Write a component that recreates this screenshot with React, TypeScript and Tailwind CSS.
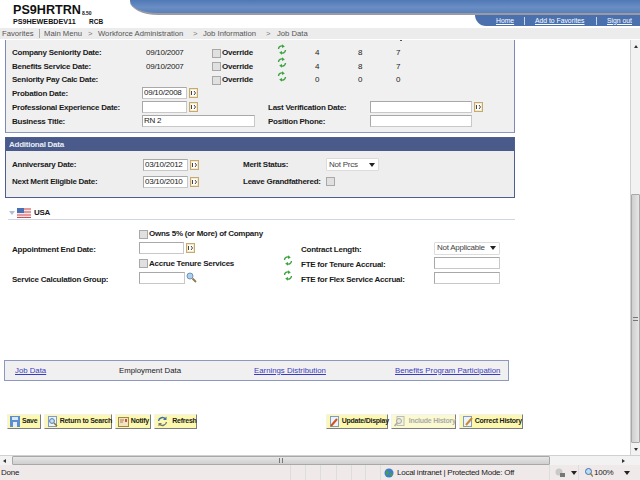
import type { ReactNode } from 'react';

const Refresh = () => (
  <svg width="10" height="11" viewBox="0 0 10 11" fill="none" stroke="#3ba33f" strokeWidth="1.4" className="-translate-y-[4px]">
    <path d="M1.5 5A3.2 3.2 0 0 1 6 2.2" />
    <path d="M8.5 6A3.2 3.2 0 0 1 4 8.8" />
    <path d="M5 0.3L7.8 2.4L5 4z" fill="#3ba33f" stroke="none" />
    <path d="M5 10.7L2.2 8.6L5 7z" fill="#3ba33f" stroke="none" />
  </svg>
);

const Calendar = () => (
  <svg width="9" height="10" viewBox="0 0 9 10" className="shrink-0">
    <rect x="0.5" y="0.5" width="8" height="9" fill="#f6e9c6" stroke="#c4aa72" />
    <rect x="2" y="2" width="5" height="6" fill="#fff" />
    <path d="M2.5 3v4M5 3l1.5 2L5 7" stroke="#444" fill="none" />
  </svg>
);

const Lookup = () => (
  <svg width="11" height="11" viewBox="0 0 11 11" className="shrink-0">
    <circle cx="4" cy="4" r="3" fill="#a9d0ee" stroke="#6f94b5" />
    <path d="M6.5 6.5L10 10" stroke="#8d7a55" strokeWidth="1.8" />
  </svg>
);

const Flag = () => (
  <svg width="14" height="10" viewBox="0 0 14 10" className="shrink-0">
    <rect width="14" height="10" fill="#f4e6e6" />
    <path d="M0 1h14M0 4h14M0 7h14M0 9.5h14" stroke="#cf4f4f" strokeWidth="1.2" />
    <rect width="7" height="5" fill="#4a6fb5" />
  </svg>
);

const Check = () => <span className="block h-[9px] w-[9px] shrink-0 border border-[#a8a8a8] bg-[#e0e0e0]" />;

const Field = ({ w, value = '', lift = '' }: { w: string; value?: string; lift?: string }) => (
  <input
    readOnly
    value={value}
    className={`h-[12px] ${w} ${lift} border border-[#c8c8c8] border-t-[#a8a8a8] border-l-[#a8a8a8] bg-white pl-[1px] text-[8px] text-[#222] outline-none`}
  />
);

const Chevron = () => (
  <svg width="6" height="4" viewBox="0 0 6 4" className="shrink-0">
    <path d="M0 0h6L3 4z" fill="#222" />
  </svg>
);

const Picker = ({ w, text, lift = '' }: { w: string; text: string; lift?: string }) => (
  <div className={`flex h-[13px] ${w} ${lift} items-center justify-between rounded-[1px] border border-[#dcdcdc] bg-white pl-[2px] pr-[3px] font-normal text-[#444]`}>
    <span>{text}</span>
    <Chevron />
  </div>
);

const SENIORITY = [
  { label: 'Company Seniority Date:', value: '09/10/2007', h: 'h-[14px]', nums: ['4', '8', '7'] },
  { label: 'Benefits Service Date:', value: '09/10/2007', h: 'h-[13px]', nums: ['4', '8', '7'] },
  { label: 'Seniority Pay Calc Date:', value: '', h: 'h-[14px]', nums: ['0', '0', '0'] },
];

const Tab = ({ children }: { children: ReactNode }) => <span className="text-[6.8px] tracking-normal underline">{children}</span>;

const Crumb = () => <span className="w-[5px] text-[#777]">&gt;</span>;

const Btn = ({ w, icon, label, off }: { w: string; icon: ReactNode; label: string; off?: boolean }) => (
  <button
    className={`flex h-[15px] ${w} items-center gap-[2px] border border-[#f2f2f2] border-r-[#7d7d7d] border-b-[#7d7d7d] ${off ? 'bg-[#fbf9cf] text-[#aaa]' : 'bg-[#fcf9ae] text-[#222]'} pl-[2px] text-[7px] font-bold`}
  >
    {icon}
    <span>{label}</span>
  </button>
);

const Page = ({ mark }: { mark: ReactNode }) => (
  <svg width="11" height="11" viewBox="0 0 11 11" className="shrink-0">
    <rect x="1.5" y="0.5" width="8" height="10" fill="#eef3fb" stroke="#7f9cc4" />
    {mark}
  </svg>
);

export default function App() {
  return (
    <div className="flex h-[480px] w-[640px] flex-col overflow-hidden bg-white font-['Liberation_Sans',Arial,sans-serif] text-[8px] tracking-[-0.25px] whitespace-nowrap text-[#1a1a1a]">
      {/* top banner */}
      <header className="flex h-[28px] shrink-0 tracking-normal">
        <div className="w-[130px] shrink-0 pl-[13px] pt-[4px] text-[#111]">
          <div className="flex items-end leading-[13px]">
            <span className="text-[12.6px] font-bold">PS9HRTRN</span>
            <span className="mb-[1px] ml-[1px] text-[5px] font-bold leading-[6px]">8.50</span>
          </div>
          <div className="flex text-[7.2px] font-bold leading-[9px]">
            <span className="w-[76px]">PS9HEWEBDEV11</span>
            <span className="text-[6.5px]">RCB</span>
          </div>
        </div>
        <div className="flex flex-1 flex-col">
          <div className="h-[15px] rounded-bl-[28px_14px] border-b-2 border-[#9a9aa5] bg-[linear-gradient(#4f78b4,#6a8ec4_55%,#5a80bb)]" />
          <div className="flex justify-end">
            <nav className="flex h-[11px] w-[165px] items-center rounded-bl-[12px] bg-[#4a70ae] pl-[21px] text-white">
              <span className="w-[28px]"><Tab>Home</Tab></span>
              <span className="h-[8px] w-px bg-[#c8d4e8]" />
              <span className="ml-[10px] w-[61px]"><Tab>Add to Favorites</Tab></span>
              <span className="h-[8px] w-px bg-[#c8d4e8]" />
              <span className="ml-[10px]"><Tab>Sign out</Tab></span>
            </nav>
          </div>
        </div>
      </header>

      {/* breadcrumbs */}
      <div className="flex h-[11px] shrink-0 items-center bg-[#ececec] pl-[2px] text-[7.7px] tracking-normal text-[#555]">
        <span className="w-[37px]">Favorites</span>
        <span className="h-[9px] w-px bg-[#aaa]" />
        <span className="ml-[4px] w-[44px]">Main Menu</span>
        <Crumb />
        <span className="ml-[5px] w-[95px]">Workforce Administration</span>
        <Crumb />
        <span className="ml-[5px] w-[63px]">Job Information</span>
        <Crumb />
        <span className="ml-[6px]">Job Data</span>
      </div>

      <div className="mt-[1px] flex min-h-0 flex-1">
        <main className="w-[630px] shrink-0">
          {/* seniority panel */}
          <section className="relative ml-[5px] h-[93px] w-[510px] border-x border-b border-x-[#7d88b5] border-b-[#8d98c2] bg-[#f0f0f0] pl-[6px] pt-[6px]">
            <span className="absolute left-[394px] top-0 h-px w-[2px] bg-[#555]" />
            {SENIORITY.map(row => (
              <div key={row.label} className={`flex ${row.h} items-center`}>
                <span className="w-[134px] font-bold">{row.label}</span>
                <span className="w-[66px]">{row.value}</span>
                <Check />
                <span className="ml-[1px] w-[55px] font-bold">Override</span>
                <span className="w-[38px]"><Refresh /></span>
                <span className="w-[43px]">{row.nums[0]}</span>
                <span className="w-[38px]">{row.nums[1]}</span>
                <span>{row.nums[2]}</span>
              </div>
            ))}
            <div className="flex h-[14px] items-center">
              <span className="w-[130px] font-bold">Probation Date:</span>
              <Field w="w-[45px]" value="09/10/2008" lift="-translate-y-px" />
              <span className="ml-[2px] -translate-y-px"><Calendar /></span>
            </div>
            <div className="flex h-[14px] items-center">
              <span className="w-[130px] font-bold">Professional Experience Date:</span>
              <Field w="w-[45px]" lift="-translate-y-px" />
              <span className="ml-[2px] w-[79px] -translate-y-px"><Calendar /></span>
              <span className="w-[102px] font-bold">Last Verification Date:</span>
              <Field w="w-[102px]" lift="-translate-y-px" />
              <span className="ml-[2px] -translate-y-px"><Calendar /></span>
            </div>
            <div className="flex h-[13px] items-center">
              <span className="w-[130px] font-bold">Business Title:</span>
              <Field w="w-[113px]" value="RN 2" lift="-translate-y-px" />
              <span className="ml-[13px] w-[102px] font-bold">Position Phone:</span>
              <Field w="w-[102px]" lift="-translate-y-px" />
            </div>
          </section>

          {/* additional data */}
          <section className="ml-[5px] mt-[4px] w-[510px] border border-[#4f5e91] bg-[#eeeeee]">
            <h2 className="flex h-[13px] items-center bg-[#4a5a8a] pl-[3px] font-bold text-[#e8ecf5]">Additional Data</h2>
            <div className="flex h-[22px] items-center pl-[6px] pt-[5px]">
              <span className="w-[131px] font-bold">Anniversary Date:</span>
              <Field w="w-[45px]" value="03/10/2012" />
              <span className="ml-[2px] w-[53px]"><Calendar /></span>
              <span className="w-[83px] font-bold">Merit Status:</span>
              <Picker w="w-[53px]" text="Not Prcs" />
            </div>
            <div className="flex h-[24px] items-center pl-[6px] pb-[7px]">
              <span className="w-[131px] font-bold">Next Merit Eligible Date:</span>
              <Field w="w-[45px]" value="03/10/2010" />
              <span className="ml-[2px] w-[53px]"><Calendar /></span>
              <span className="w-[83px] font-bold">Leave Grandfathered:</span>
              <Check />
            </div>
          </section>

          {/* USA */}
          <div className="ml-[8px] mt-[8px] flex h-[14px] w-[507px] items-center border-b border-[#cfd4e6]">
            <span className="ml-[1px] h-0 w-0 border-x-[3px] border-t-[4px] border-x-transparent border-t-[#a9c2d8]" />
            <span className="ml-[2px]"><Flag /></span>
            <span className="ml-[3px] font-bold">USA</span>
          </div>

          <div className="ml-[12px] mt-[7px] grid w-[490px] grid-cols-[127px_144px_18px_133px_66px] grid-rows-[16px_14px_15px_15px] items-center font-bold">
            <span />
            <span className="flex -translate-y-px items-center gap-[1px]"><Check /> <span>Owns 5% (or More) of Company</span></span>
            <span />
            <span />
            <span />

            <span>Appointment End Date:</span>
            <span className="flex -translate-y-[2px] items-center gap-[2px]"><Field w="w-[45px]" /><Calendar /></span>
            <span />
            <span>Contract Length:</span>
            <Picker w="w-[66px]" text="Not Applicable" lift="-translate-y-[2px]" />

            <span />
            <span className="flex -translate-y-px items-center gap-[1px]"><Check /> <span>Accrue Tenure Services</span></span>
            <Refresh />
            <span>FTE for Tenure Accrual:</span>
            <Field w="w-[66px]" lift="-translate-y-[2px]" />

            <span>Service Calculation Group:</span>
            <span className="flex -translate-y-[2px] items-center gap-[1px]"><Field w="w-[46px]" /><Lookup /></span>
            <Refresh />
            <span>FTE for Flex Service Accrual:</span>
            <Field w="w-[66px]" lift="-translate-y-[2px]" />
          </div>

          {/* page links */}
          <div className="ml-[4px] mt-[73px] flex h-[21px] w-[505px] items-center border border-[#8d98c2] bg-[#f0f0f0] pl-[10px] text-[7.8px] tracking-normal">
            <span className="w-[104px] text-[#3b3bc0]"><span className="underline">Job Data</span></span>
            <span className="w-[135px]">Employment Data</span>
            <span className="w-[141px] text-[#3b3bc0] underline">Earnings Distribution</span>
            <span className="text-[#3b3bc0] underline">Benefits Program Participation</span>
          </div>

          {/* toolbar */}
          <div className="ml-[7px] mt-[33px] flex w-[516px] gap-[3px]">
            <Btn w="w-[34px]" label="Save" icon={
              <svg width="10" height="11" viewBox="0 0 10 11" className="shrink-0">
                <rect width="10" height="11" fill="#5b8fd0" />
                <rect x="2" y="1" width="6" height="3" fill="#dbe8f7" />
                <rect x="3" y="6" width="4" height="5" fill="#e8eef7" />
              </svg>
            } />
            <Btn w="w-[68px]" label="Return to Search" icon={<Page mark={<><circle cx="5" cy="5" r="2.4" fill="#bfe0f5" stroke="#567aa8" /><path d="M7 7l3 3" stroke="#8d6b32" strokeWidth="1.4" /></>} />} />
            <Btn w="w-[37px]" label="Notify" icon={
              <svg width="11" height="10" viewBox="0 0 11 10" className="shrink-0">
                <rect x="0.5" y="0.5" width="10" height="9" fill="#f3e3c1" stroke="#a08650" />
                <path d="M2 3h4M2 5h3" stroke="#a08650" />
                <rect x="7" y="2" width="2" height="3" fill="#c05a3a" />
              </svg>
            } />
            <Btn w="w-[43px]" label="Refresh" icon={
              <svg width="11" height="11" viewBox="0 0 11 11" fill="none" className="mr-[2px] shrink-0" strokeWidth="1.4">
                <path d="M1.5 5A4 4 0 0 1 8.5 3" stroke="#3e6fb0" />
                <path d="M9.5 6A4 4 0 0 1 2.5 8" stroke="#777" />
                <path d="M9.5 0.5v3.5H6z" fill="#3e6fb0" />
                <path d="M1.5 10.5V7H5z" fill="#777" />
              </svg>
            } />
            <span className="w-[124px]" />
            <Btn w="w-[62px]" label="Update/Display" icon={<Page mark={<path d="M2 10L8 3" stroke="#d0531f" strokeWidth="2" />} />} />
            <Btn w="w-[65px]" off label="Include History" icon={
              <svg width="11" height="11" viewBox="0 0 11 11" className="mr-[2px] shrink-0">
                <rect x="3" y="0.5" width="7" height="9" fill="#f3f3e2" stroke="#bdbdb0" />
                <circle cx="5" cy="5" r="2.5" fill="#e8e8dc" stroke="#aaaa9c" />
                <path d="M3 7L0.5 10" stroke="#aaaa9c" strokeWidth="1.4" />
              </svg>
            } />
            <Btn w="w-[65px]" label="Correct History" icon={<Page mark={<path d="M4 9L10 2" stroke="#c98a2b" strokeWidth="2" />} />} />
          </div>
        </main>

        {/* vertical scrollbar */}
        <div className="flex w-[10px] flex-col border-l border-[#d0d0d0] bg-[#f2f2f2]">
          <div className="flex h-[12px] items-center justify-center">
            <span className="h-0 w-0 border-x-[2px] border-b-[3px] border-x-transparent border-b-[#333]" />
          </div>
          <div className="h-[142px]" />
          <div className="flex h-[249px] items-center justify-center rounded-[1px] border border-[#a8a8a8] bg-[linear-gradient(90deg,#cfcfcf,#e6e6e6)]">
            <span className="h-[4px] w-[5px] border-y border-[#777]" />
          </div>
          <div className="flex flex-1 items-center justify-center">
            <span className="h-0 w-0 border-x-[2px] border-t-[3px] border-x-transparent border-t-[#333]" />
          </div>
        </div>
      </div>

      {/* horizontal scrollbar */}
      <div className="flex h-[10px] shrink-0 items-center border-t border-[#d0d0d0] bg-[#f2f2f2]">
        <span className="ml-[3px] h-0 w-0 border-y-[2px] border-r-[3px] border-y-transparent border-r-[#333]" />
        <div className="ml-[6px] flex h-full w-[538px] items-center justify-center rounded-[1px] border border-[#a8a8a8] bg-[linear-gradient(#e6e6e6,#cfcfcf)]">
          <span className="h-[5px] w-[4px] border-x border-[#777]" />
        </div>
        <span className="ml-[72px] h-0 w-0 border-y-[2px] border-l-[3px] border-y-transparent border-l-[#333]" />
      </div>

      {/* status bar */}
      <footer className="flex h-[15px] shrink-0 items-center bg-[#f0e9e9] text-[#222]">
        <span className="w-[290px] pl-[1px]">Done</span>
        <span className="h-full w-[15px] border-l border-[#ddd]" />
        <span className="h-full w-[15px] border-l border-[#ddd]" />
        <span className="h-full w-[16px] border-l border-[#ddd]" />
        <span className="h-full w-[15px] border-l border-[#ddd]" />
        <span className="h-full w-[14px] border-l border-[#ddd]" />
        <span className="h-full w-[15px] border-l border-[#ddd]" />
        <span className="flex h-full w-[169px] items-center border-l border-[#ddd] pl-[3px]">
          <svg width="10" height="10" viewBox="0 0 10 10" className="mr-[3px] shrink-0">
            <circle cx="5" cy="5" r="4.5" fill="#3e7fc4" />
            <path d="M2 2.5L5 4 4 7 2 6zM6 5l3 1-2 3z" fill="#4aa04a" />
          </svg>
          Local intranet | Protected Mode: Off
        </span>
        <span className="flex h-full w-[29px] items-center border-l border-[#ddd] pl-[5px]">
          <svg width="11" height="10" viewBox="0 0 11 10" className="mr-[5px] shrink-0">
            <circle cx="4" cy="4" r="3.5" fill="#c9c9c9" />
            <rect x="5" y="5" width="5" height="4" fill="#777" />
          </svg>
          <Chevron />
        </span>
        <span className="flex h-full flex-1 items-center border-l border-[#ddd] pl-[6px]">
          <svg width="8" height="9" viewBox="0 0 8 9" className="mr-[1px] shrink-0">
            <circle cx="3.5" cy="3.5" r="3" fill="#bcdcf4" stroke="#3f73ad" />
            <path d="M5.5 5.5L8 8.5" stroke="#a8752f" strokeWidth="1.4" />
          </svg>
          100%
          <span className="ml-[11px]"><Chevron /></span>
        </span>
      </footer>
    </div>
  );
}
